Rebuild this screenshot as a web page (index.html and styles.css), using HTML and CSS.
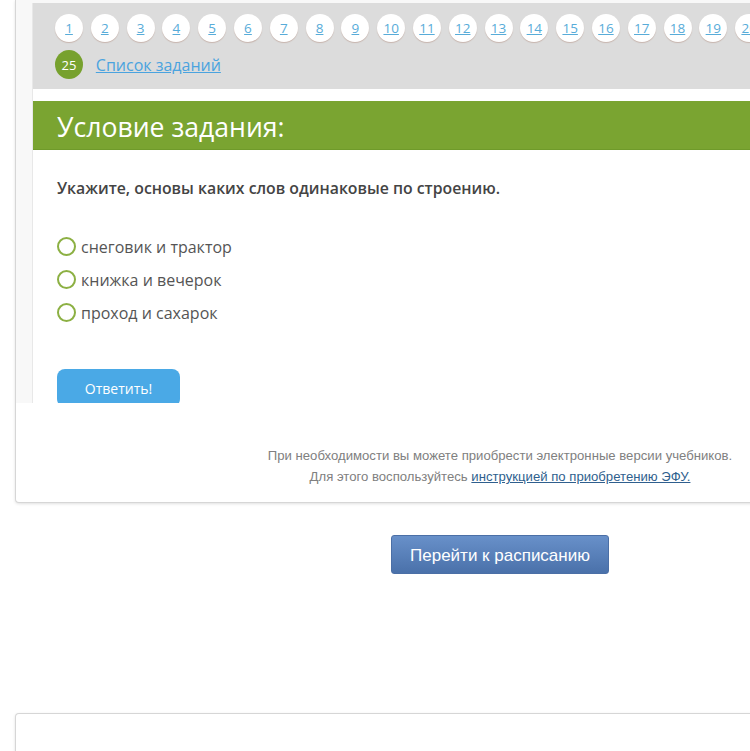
FILE: index.html
```html
<!DOCTYPE html>
<html lang="ru">
<head>
<meta charset="utf-8">
<link rel="stylesheet" href="styles.css">
</head>
<body>
<div class="page">
  <div class="card">
    <div class="frame">
      <div class="inner">
        <div class="nav">
          <div class="nav-row">
            <a class="num" href="#">1</a><a class="num" href="#">2</a><a class="num" href="#">3</a><a class="num" href="#">4</a><a class="num" href="#">5</a><a class="num" href="#">6</a><a class="num" href="#">7</a><a class="num" href="#">8</a><a class="num" href="#">9</a><a class="num" href="#">10</a><a class="num" href="#">11</a><a class="num" href="#">12</a><a class="num" href="#">13</a><a class="num" href="#">14</a><a class="num" href="#">15</a><a class="num" href="#">16</a><a class="num" href="#">17</a><a class="num" href="#">18</a><a class="num" href="#">19</a><a class="num" href="#">20</a><a class="num" href="#">21</a>
          </div>
          <div class="nav-row">
            <span class="num current">25</span>
            <a class="list-link" href="#">Список заданий</a>
          </div>
        </div>
        <div class="task-head">Условие задания:</div>
        <div class="task-body">
          <p class="question">Укажите, основы каких слов одинаковые по строению.</p>
          <div class="options">
            <label class="option"><span class="radio"></span>снеговик и трактор</label>
            <label class="option"><span class="radio"></span>книжка и вечерок</label>
            <label class="option"><span class="radio"></span>проход и сахарок</label>
          </div>
          <button class="answer">Ответить!</button>
        </div>
      </div>
    </div>
    <div class="note">
      <p>При необходимости вы можете приобрести электронные версии учебников.</p>
      <p>Для этого воспользуйтесь <a href="#">инструкцией по приобретению ЭФУ.</a></p>
    </div>
  </div>
  <div class="actions">
    <button class="schedule">Перейти к расписанию</button>
  </div>
  <div class="card next"></div>
</div>
</body>
</html>
```

FILE: styles.css
```css
html, body {
  margin: 0;
  padding: 0;
  background: #fff;
  overflow: hidden;
}
.page {
  width: 1000px;
  font-family: "Open Sans", sans-serif;
}
.card {
  margin-left: 15px;
  width: 968px;
  border: 1px solid #d6d6d6;
  border-top: none;
  border-radius: 0 0 4px 4px;
  box-shadow: 0 1px 3px rgba(0,0,0,0.12);
  background: #fff;
}
.frame {
  height: 403px;
  overflow: hidden;
  background: #f8f8f8;
  padding-left: 16px;
  box-sizing: border-box;
}
.inner {
  background: #fff;
  border-left: 1px solid #e8e8e8;
  margin-top: 3px;
  height: 420px;
}
.nav {
  background: #dcdcdc;
  padding: 11px 0 10px 22px;
  display: flex;
  flex-direction: column;
  gap: 8px;
}
.nav-row {
  display: flex;
  align-items: center;
  gap: 7.8px;
  white-space: nowrap;
}
.num {
  flex: none;
  width: 28px;
  height: 28px;
  border-radius: 50%;
  background: #fff;
  box-shadow: 0 1px 1px rgba(160,110,90,0.35);
  display: flex;
  align-items: center;
  justify-content: center;
  font-size: 13.5px;
  color: #58acd9;
  text-decoration: underline;
}
.num.current {
  background: #77a12e;
  color: #fff;
  text-decoration: none;
  box-shadow: none;
  width: 28px;
  height: 29px;
  font-size: 13px;
}
.list-link {
  margin-left: 5px;
  font-size: 16px;
  color: #4aa3df;
  text-decoration: underline;
}
.task-head {
  margin-top: 12px;
  height: 49px;
  box-sizing: border-box;
  background: #7aa431;
  border-bottom: 1px solid #6f9a2a;
  color: #fff;
  font-size: 26.6px;
  line-height: 49px;
  padding: 2px 0 0 24px;
}
.task-body {
  padding-left: 24px;
  padding-top: 28px;
}
.question {
  margin: 0;
  font-size: 15.8px;
  line-height: 20px;
  font-weight: 600;
  color: #444;
}
.options {
  margin-top: 32px;
  display: flex;
  flex-direction: column;
}
.option {
  display: flex;
  align-items: center;
  gap: 5px;
  height: 33px;
  font-size: 16px;
  color: #555;
}
.radio {
  width: 15px;
  height: 15px;
  border: 2px solid #8cb043;
  border-radius: 50%;
  flex: none;
}
.answer {
  margin-top: 40px;
  width: 123px;
  height: 38px;
  border: none;
  border-radius: 8px;
  background: #4aa9e6;
  color: #fff;
  font-family: "Open Sans", sans-serif;
  font-size: 14px;
}
.note {
  padding: 42px 0 15px;
  text-align: center;
  font-family: "Liberation Sans", sans-serif;
  font-size: 13.15px;
  line-height: 21px;
  color: #808080;
}
.note p {
  margin: 0;
}
.note a {
  color: #2f5f8e;
  text-decoration: underline;
}
.actions {
  padding-top: 32px;
  display: flex;
  justify-content: center;
}
.schedule {
  width: 218px;
  height: 39px;
  border: 1px solid #4b6fa6;
  border-radius: 3px;
  background: linear-gradient(#6890c9, #4a71aa);
  color: #fff;
  font-family: "Liberation Sans", sans-serif;
  font-size: 17px;
  padding-top: 3px;
}
.card.next {
  margin-top: 139px;
  height: 60px;
  border-top: 1px solid #d6d6d6;
  border-bottom: none;
  border-radius: 4px 4px 0 0;
}
```
